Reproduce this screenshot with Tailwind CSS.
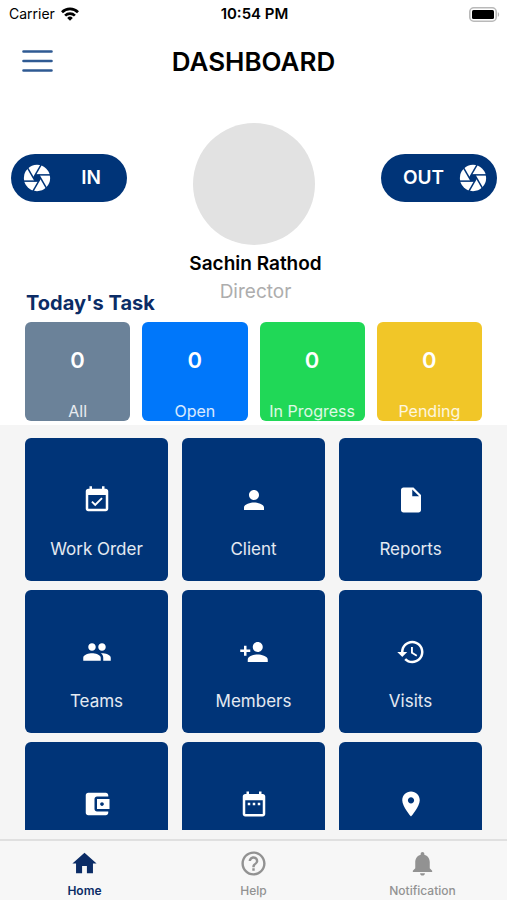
<!DOCTYPE html>
<html lang="en">
<head>
  <meta charset="UTF-8" />
  <meta name="viewport" content="width=device-width, initial-scale=1.0"/>
  <title>Dashboard</title>
  <script src="https://cdn.jsdelivr.net/npm/@tailwindcss/browser@4"></script>
</head>
<body class="h-screen flex flex-col bg-white text-black font-['Inter',sans-serif] overflow-hidden">

  <!-- shared aperture icon -->
  <svg class="hidden">
    <defs>
      <path id="blade" d="M-1.7 -2.9H12.5" />
      <g id="aperture">
        <circle r="12.2" fill="#fff" />
        <path d="M-1.7-2.9H1.7L3.4 0L1.7 2.9H-1.7L-3.4 0Z" fill="#003478" />
        <g stroke="#003478" stroke-width="1.4">
          <use href="#blade" />
          <use href="#blade" transform="rotate(60)" />
          <use href="#blade" transform="rotate(120)" />
          <use href="#blade" transform="rotate(180)" />
          <use href="#blade" transform="rotate(240)" />
          <use href="#blade" transform="rotate(300)" />
        </g>
      </g>
    </defs>
  </svg>

  <!-- status bar -->
  <div class="grid grid-cols-3 items-center h-7 pl-[9px] pr-[7px] text-sm shrink-0">
    <div class="flex items-center gap-1.5">
      <span>Carrier</span>
      <svg class="w-[18px] h-[14px]" viewBox="0 0 18 14" fill="none" stroke="#000" stroke-width="2.7">
        <path d="M1 5.2a11.4 11.4 0 0 1 16 0" />
        <path d="M4.1 8.6a7 7 0 0 1 9.8 0" />
        <path d="M9 13.8L6.2 10.9a4 4 0 0 1 5.6 0Z" fill="#000" stroke="none" />
      </svg>
    </div>
    <div class="text-center text-[15px] leading-5 font-semibold">10:54 PM</div>
    <svg class="justify-self-end w-[31px] h-[15px]" viewBox="0 0 31 15">
      <rect x="0.8" y="0.8" width="26.4" height="13.4" rx="4" fill="#fff" stroke="#b9b9b9" stroke-width="1.6" />
      <rect x="3" y="3" width="22" height="9" rx="1.5" fill="#000" />
      <path d="M28.8 5.2c1.8.6 1.8 4 0 4.6z" fill="#b9b9b9" />
    </svg>
  </div>

  <!-- header -->
  <header class="grid grid-cols-[1fr_auto_1fr] items-center h-[66px] px-[22px] shrink-0">
    <button type="button" aria-label="Menu" class="justify-self-start">
      <svg class="w-[31px] h-6" viewBox="0 0 31 24" stroke="#2f5a93" stroke-width="2.6" stroke-linecap="round">
        <path d="M1.5 2.5h28M1.5 12h28M1.5 21.5h28" />
      </svg>
    </button>
    <h1 class="text-[26px] font-semibold">DASHBOARD</h1>
  </header>

  <!-- profile -->
  <section class="grid grid-cols-[1fr_auto_1fr] pl-[11px] pr-[10px] pt-[29px] shrink-0">
    <button type="button" class="flex items-center justify-between w-[116px] h-12 mt-[31px] pl-3 pr-[26px] rounded-full bg-[#003478] text-white text-[19px] font-semibold">
      <svg class="size-[28px]" viewBox="-13 -13 26 26"><use href="#aperture" /></svg>
      IN
    </button>
    <div class="size-[122px] rounded-full bg-[#e2e2e2]"></div>
    <button type="button" class="justify-self-end flex items-center justify-between w-[116px] h-12 mt-[31px] pl-[22px] pr-[10px] rounded-full bg-[#003478] text-white text-[19px] font-semibold">
      OUT
      <svg class="size-[28px]" viewBox="-13 -13 26 26"><use href="#aperture" /></svg>
    </button>
  </section>
  <div class="grid text-center shrink-0">
    <div class="col-start-1 row-start-1 pt-[5px] pl-1">
      <p class="text-[19px] leading-7 font-semibold">Sachin Rathod</p>
      <p class="text-[19px] leading-7 text-[#adadad]">Director</p>
    </div>
    <h2 class="col-start-1 row-start-1 self-end justify-self-start pl-[26px] pt-11 text-xl leading-7 font-bold text-[#0b2c66]">Today's Task</h2>
  </div>

  <!-- task counters -->
  <section class="grid grid-cols-4 gap-3 px-[25px] pt-[5px] pb-1 shrink-0 text-white text-center">
    <a href="#" class="flex flex-col justify-between h-[99px] pt-5 rounded-md bg-[#6b8299]">
      <span class="text-[22px] leading-9 font-semibold">0</span>
      <span class="text-base leading-5 text-white/85">All</span>
    </a>
    <a href="#" class="flex flex-col justify-between h-[99px] pt-5 rounded-md bg-[#0077fa]">
      <span class="text-[22px] leading-9 font-semibold">0</span>
      <span class="text-base leading-5 text-white/85">Open</span>
    </a>
    <a href="#" class="flex flex-col justify-between h-[99px] pt-5 rounded-md bg-[#20d857]">
      <span class="text-[22px] leading-9 font-semibold">0</span>
      <span class="text-base leading-5 text-white/85">In Progress</span>
    </a>
    <a href="#" class="flex flex-col justify-between h-[99px] pt-5 rounded-md bg-[#f1c628]">
      <span class="text-[22px] leading-9 font-semibold">0</span>
      <span class="text-base leading-5 text-white/85">Pending</span>
    </a>
  </section>

  <!-- modules -->
  <main class="flex-1 min-h-0 bg-[#f5f5f5] px-[25px] pt-[13px] pb-[9px]">
    <div class="grid grid-cols-3 content-start gap-x-[14px] gap-y-[9px] h-full overflow-hidden text-white text-[17px] leading-6">
      <a href="#" class="flex flex-col items-center gap-[22px] aspect-square pt-[47px] rounded-md bg-[#003478]">
        <svg class="size-[30px]" viewBox="0 0 24 24" fill="currentColor"><path d="M16.53 11.06L15.47 10l-4.88 4.88-2.12-2.12-1.06 1.06L10.59 17l5.94-5.94zM19 3h-1V1h-2v2H8V1H6v2H5c-1.11 0-1.99.9-1.99 2L3 19c0 1.1.89 2 2 2h14c1.1 0 2-.9 2-2V5c0-1.1-.9-2-2-2zm0 16H5V8h14v11z"/></svg>
        <span class="text-white/90">Work Order</span>
      </a>
      <a href="#" class="flex flex-col items-center gap-[22px] aspect-square pt-[47px] rounded-md bg-[#003478]">
        <svg class="size-[30px]" viewBox="0 0 24 24" fill="currentColor"><path d="M12 12c2.21 0 4-1.79 4-4s-1.79-4-4-4-4 1.79-4 4 1.79 4 4 4zm0 2c-2.67 0-8 1.34-8 4v2h16v-2c0-2.66-5.33-4-8-4z"/></svg>
        <span class="text-white/90">Client</span>
      </a>
      <a href="#" class="flex flex-col items-center gap-[22px] aspect-square pt-[47px] rounded-md bg-[#003478]">
        <svg class="size-[30px]" viewBox="0 0 24 24" fill="currentColor"><path d="M6 2c-1.1 0-1.99.9-1.99 2L4 20c0 1.1.89 2 1.99 2H18c1.1 0 2-.9 2-2V8l-6-6H6zm7 7V3.5L18.5 9H13z"/></svg>
        <span class="text-white/90">Reports</span>
      </a>
      <a href="#" class="flex flex-col items-center gap-[22px] aspect-square pt-[47px] rounded-md bg-[#003478]">
        <svg class="size-[30px]" viewBox="0 0 24 24" fill="currentColor"><path d="M16 11c1.66 0 2.99-1.34 2.99-3S17.66 5 16 5c-1.66 0-3 1.34-3 3s1.34 3 3 3zm-8 0c1.66 0 2.99-1.34 2.99-3S9.66 5 8 5C6.34 5 5 6.34 5 8s1.34 3 3 3zm0 2c-2.33 0-7 1.17-7 3.5V19h14v-2.5c0-2.33-4.67-3.5-7-3.5zm8 0c-.29 0-.62.02-.97.05 1.16.84 1.97 1.97 1.97 3.45V19h6v-2.5c0-2.33-4.67-3.5-7-3.5z"/></svg>
        <span class="text-white/90">Teams</span>
      </a>
      <a href="#" class="flex flex-col items-center gap-[22px] aspect-square pt-[47px] rounded-md bg-[#003478]">
        <svg class="size-[30px]" viewBox="0 0 24 24" fill="currentColor"><path d="M15 12c2.21 0 4-1.79 4-4s-1.79-4-4-4-4 1.79-4 4 1.79 4 4 4zm-9-2V7H4v3H1v2h3v3h2v-3h3v-2H6zm9 4c-2.67 0-8 1.34-8 4v2h16v-2c0-2.66-5.33-4-8-4z"/></svg>
        <span class="text-white/90">Members</span>
      </a>
      <a href="#" class="flex flex-col items-center gap-[22px] aspect-square pt-[47px] rounded-md bg-[#003478]">
        <svg class="size-[30px]" viewBox="0 0 24 24" fill="currentColor"><path d="M13 3c-4.97 0-9 4.03-9 9H1l3.89 3.89.07.14L9 12H6c0-3.87 3.13-7 7-7s7 3.13 7 7-3.13 7-7 7c-1.93 0-3.68-.79-4.94-2.06l-1.42 1.42C8.27 19.99 10.51 21 13 21c4.97 0 9-4.03 9-9s-4.03-9-9-9zm-1 5v5l4.28 2.54.72-1.21-3.5-2.08V8H12z"/></svg>
        <span class="text-white/90">Visits</span>
      </a>
      <a href="#" aria-label="Wallet" class="flex flex-col items-center aspect-square pt-[47px] rounded-md bg-[#003478]">
        <svg class="size-[30px]" viewBox="0 0 24 24" fill="currentColor"><path d="M21 18v1c0 1.1-.9 2-2 2H5c-1.11 0-2-.9-2-2V5c0-1.1.89-2 2-2h14c1.1 0 2 .9 2 2v1h-9c-1.11 0-2 .9-2 2v8c0 1.1.89 2 2 2h9zm-9-2h10V8H12v8zm4-2.5c-.83 0-1.5-.67-1.5-1.5s.67-1.5 1.5-1.5 1.5.67 1.5 1.5-.67 1.5-1.5 1.5z"/></svg>
      </a>
      <a href="#" aria-label="Calendar" class="flex flex-col items-center aspect-square pt-[47px] rounded-md bg-[#003478]">
        <svg class="size-[30px]" viewBox="0 0 24 24" fill="currentColor"><path d="M9 11H7v2h2v-2zm4 0h-2v2h2v-2zm4 0h-2v2h2v-2zm2-7h-1V2h-2v2H8V2H6v2H5c-1.11 0-1.99.9-1.99 2L3 20c0 1.1.89 2 2 2h14c1.1 0 2-.9 2-2V6c0-1.1-.9-2-2-2zm0 16H5V9h14v11z"/></svg>
      </a>
      <a href="#" aria-label="Location" class="flex flex-col items-center aspect-square pt-[47px] rounded-md bg-[#003478]">
        <svg class="size-[30px]" viewBox="0 0 24 24" fill="currentColor"><path d="M12 2C8.13 2 5 5.13 5 9c0 5.25 7 13 7 13s7-7.75 7-13c0-3.87-3.13-7-7-7zm0 9.5c-1.38 0-2.5-1.12-2.5-2.5s1.12-2.5 2.5-2.5 2.5 1.12 2.5 2.5-1.12 2.5-2.5 2.5z"/></svg>
      </a>
    </div>
  </main>

  <!-- tab bar -->
  <nav class="grid grid-cols-3 h-[61px] pt-2 bg-[#f7f7f7] border-t-2 border-[#e0e0e0] text-xs font-medium text-[#929292] shrink-0">
    <a href="#" class="flex flex-col items-center gap-[5px] text-[#0b2c66] font-semibold">
      <svg class="size-[29px]" viewBox="0 0 24 24" fill="currentColor"><path d="M10 20v-6h4v6h5v-8h3L12 3 2 12h3v8z"/></svg>
      Home
    </a>
    <a href="#" class="flex flex-col items-center gap-[5px]">
      <svg class="size-[29px]" viewBox="0 0 24 24" fill="currentColor"><path d="M11 18h2v-2h-2v2zm1-16C6.48 2 2 6.48 2 12s4.48 10 10 10 10-4.48 10-10S17.52 2 12 2zm0 18c-4.41 0-8-3.59-8-8s3.59-8 8-8 8 3.59 8 8-3.59 8-8 8zm0-14c-2.21 0-4 1.79-4 4h2c0-1.1.9-2 2-2s2 .9 2 2c0 2-3 1.75-3 5h2c0-2.25 3-2.5 3-5 0-2.21-1.79-4-4-4z"/></svg>
      Help
    </a>
    <a href="#" class="flex flex-col items-center gap-[5px]">
      <svg class="size-[29px]" viewBox="0 0 24 24" fill="currentColor"><path d="M12 22c1.1 0 2-.9 2-2h-4c0 1.1.89 2 2 2zm6-6v-5c0-3.07-1.64-5.64-4.5-6.32V4c0-.83-.67-1.5-1.5-1.5s-1.5.67-1.5 1.5v.68C7.63 5.36 6 7.92 6 11v5l-2 2v1h16v-1l-2-2z"/></svg>
      Notification
    </a>
  </nav>

</body>
</html>
